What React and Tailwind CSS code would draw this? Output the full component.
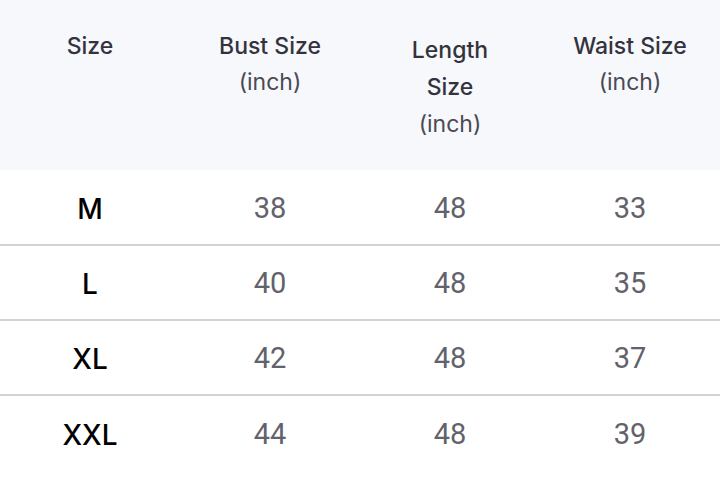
import React from 'react';

const rows = [
    { size: 'M', bust: 38, length: 48, waist: 33 },
    { size: 'L', bust: 40, length: 48, waist: 35 },
    { size: 'XL', bust: 42, length: 48, waist: 37 },
    { size: 'XXL', bust: 44, length: 48, waist: 39 },
];

const App = () => {
    return (
        <div className="w-[720px] h-[477px] bg-white overflow-hidden font-['Inter',sans-serif]">
            <table className="w-full table-fixed border-collapse text-center">
                <thead>
                    <tr className="bg-[#f7f8fc] h-[170px] align-top text-[23px] text-[#33333d]">
                        <th className="pt-[28px] font-medium leading-[36px]">Size</th>
                        <th className="pt-[28px] font-medium leading-[36px]">
                            Bust Size
                            <div className="font-normal text-[#4a4a55]">(inch)</div>
                        </th>
                        <th className="pt-[32px] px-10 font-medium leading-[37px]">
                            Length Size
                            <div className="font-normal text-[#4a4a55]">(inch)</div>
                        </th>
                        <th className="pt-[28px] font-medium leading-[36px]">
                            Waist Size
                            <div className="font-normal text-[#4a4a55]">(inch)</div>
                        </th>
                    </tr>
                </thead>
                <tbody className="font-['Roboto',sans-serif] text-[29px]">
                    {rows.map((r, i) => (
                        <tr key={r.size} className={`h-[75px] ${i < rows.length - 1 ? 'border-b-2 border-[#d2d2d7]' : ''}`}>
                            <td className="pt-[3px] font-medium text-black font-['Inter',sans-serif] text-[28px]">{r.size}</td>
                            <td className="pt-[3px] text-[#62626c]">{r.bust}</td>
                            <td className="pt-[3px] text-[#62626c]">{r.length}</td>
                            <td className="pt-[3px] text-[#62626c]">{r.waist}</td>
                        </tr>
                    ))}
                </tbody>
            </table>
        </div>
    );
};

export default App;
